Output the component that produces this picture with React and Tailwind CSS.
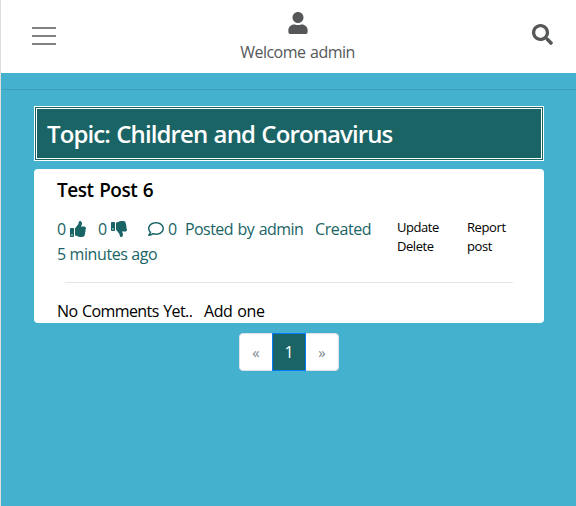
import { FaUser, FaSearch, FaThumbsUp, FaThumbsDown, FaRegComment } from "react-icons/fa";

function Header() {
  return (
    <header className="flex h-[73px] items-start justify-between bg-white pl-[31px] pr-[23px] text-[#555759]">
      <button className="mt-[27px] flex w-6 flex-col gap-[6px]" aria-label="Menu">
        <span className="h-[2px] w-full bg-[#808080]" />
        <span className="h-[2px] w-full bg-[#808080]" />
        <span className="h-[2px] w-full bg-[#808080]" />
      </button>
      <div className="flex flex-col items-center pl-[7px]">
        <FaUser className="mt-[12px] h-[22px] w-[20px]" />
        <span className="mt-[6px] whitespace-nowrap text-[16px] leading-6 tracking-[-0.52px] [word-spacing:1px]">Welcome admin</span>
      </div>
      <FaSearch className="mt-[24px] h-[21px] w-[21px]" />
    </header>
  );
}

function Post() {
  return (
    <article className="mt-2 h-[154px] rounded bg-white pl-[23px] text-black">
      <h2 className="pt-[9px] text-[19px] font-semibold leading-6 tracking-[-0.45px] [word-spacing:1px]">Test Post 6</h2>
      <div className="mt-[15px] flex text-[#1a6466]">
        <div className="w-[340px] whitespace-nowrap text-[16px] leading-[25px] tracking-[-0.4px]">
          <div className="flex items-center">
            <span className="w-[13px]">0</span>
            <FaThumbsUp className="-mt-px h-4 w-4" />
            <span className="ml-[12px] w-[13px]">0</span>
            <FaThumbsDown className="-mt-px h-4 w-4" />
            <FaRegComment className="-mt-px ml-[21px] h-4 w-4" />
            <span className="ml-[4px] w-[17px]">0</span>
            <span className="w-[130px] tracking-[-0.58px] [word-spacing:1px]">Posted by admin</span>
            <span>Created</span>
          </div>
          <div>5 minutes ago</div>
        </div>
        <div className="w-[70px] pt-px text-[13px] leading-[19px] tracking-[-0.45px] text-black">
          <div>Update</div>
          <div>Delete</div>
        </div>
        <div className="pt-px text-[13px] leading-[19px] tracking-[-0.4px] text-black">
          <div>Report</div>
          <div>post</div>
        </div>
      </div>
      <hr className="ml-2 mt-[15px] w-[448px] border-[#e5e5e5]" />
      <div className="mt-[16px] flex whitespace-nowrap text-[16px] leading-6 tracking-[-0.6px] [word-spacing:1px]">
        <span className="w-[147px]">No Comments Yet..</span>
        <span className="tracking-[-0.4px]">Add one</span>
      </div>
    </article>
  );
}

function Pagination() {
  return (
    <nav className="mx-auto mt-[10px] flex h-[38px] w-[100px] rounded border border-[#dee2e6] bg-white text-center text-[16px] leading-[36px] text-[#6c757d]">
      <span className="w-[32px] text-[15px] text-[#7d858c]">«</span>
      <span className="-my-px w-[34px] border border-[#007bff] bg-[#1a6466] text-white">1</span>
      <span className="w-[32px] text-[15px] text-[#7d858c]">»</span>
    </nav>
  );
}

export default function App() {
  return (
    <div className="h-[506px] w-[576px] overflow-hidden border-l border-[#dedede] bg-[#44b1ce] font-['Open_Sans',sans-serif]">
      <Header />
      <hr className="mt-4 border-[#3d9fb9]" />
      <main className="ml-[33px] mt-4 w-[510px]">
        <h1 className="h-[55px] whitespace-nowrap border-[3px] border-double border-white bg-[#1a6466] pl-[10px] text-[24px] font-semibold leading-[50px] tracking-[-0.9px] text-white [word-spacing:1px]">
          Topic: Children and Coronavirus
        </h1>
        <Post />
        <Pagination />
      </main>
    </div>
  );
}
